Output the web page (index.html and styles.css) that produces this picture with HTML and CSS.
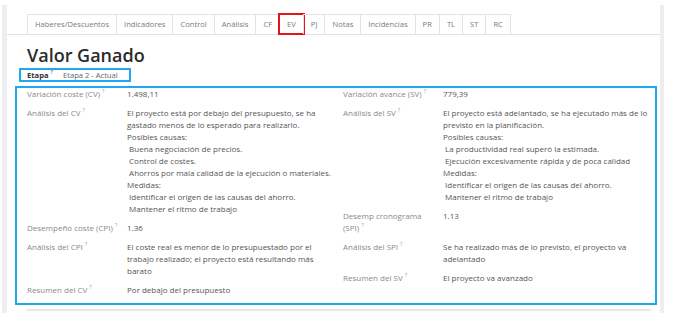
FILE: index.html
```html
<!DOCTYPE html>
<html lang="es">
  <head>
    <meta charset="UTF-8" />
    <title>Valor Ganado</title>
    <link rel="stylesheet" href="styles.css">
  </head>
  <body>
    <div class="frame">
      <div class="edge left"></div>
      <div class="sheet">
        <ul class="tabs">
          <li>Haberes/Descuentos</li>
          <li>Indicadores</li>
          <li>Control</li>
          <li>Análisis</li>
          <li>CF</li>
          <li class="marked">EV</li>
          <li>PJ</li>
          <li>Notas</li>
          <li>Incidencias</li>
          <li>PR</li>
          <li>TL</li>
          <li>ST</li>
          <li>RC</li>
        </ul>

        <div class="content">
          <h1 class="title">Valor Ganado</h1>

          <div class="stage">
            <span class="stage-label">Etapa<sup>?</sup></span>
            <span class="stage-value">Etapa 2 - Actual</span>
          </div>

          <div class="fields">
            <div class="group">
              <div class="label">Variación coste (CV)<sup>?</sup></div>
              <div class="value">1.498,11</div>

              <div class="label">Análisis del CV<sup>?</sup></div>
              <div class="value">
                El proyecto está por debajo del presupuesto, se ha<br>
                gastado menos de lo esperado para realizarlo.<br>
                Posibles causas:<br>
                &nbsp;Buena negociación de precios.<br>
                &nbsp;Control de costes.<br>
                &nbsp;Ahorros por mala calidad de la ejecución o materiales.<br>
                Medidas:<br>
                &nbsp;Identificar el origen de las causas del ahorro.<br>
                &nbsp;Mantener el ritmo de trabajo
              </div>

              <div class="label">Desempeño coste (CPI)<sup>?</sup></div>
              <div class="value">1.36</div>

              <div class="label">Análisis del CPI<sup>?</sup></div>
              <div class="value">
                El coste real es menor de lo presupuestado por el<br>
                trabajo realizado; el proyecto está resultando más<br>
                barato
              </div>

              <div class="label">Resumen del CV<sup>?</sup></div>
              <div class="value">Por debajo del presupuesto</div>
            </div>

            <div class="group">
              <div class="label">Variación avance (SV)<sup>?</sup></div>
              <div class="value">779,39</div>

              <div class="label">Análisis del SV<sup>?</sup></div>
              <div class="value">
                El proyecto está adelantado, se ha ejecutado más de lo<br>
                previsto en la planificación.<br>
                Posibles causas:<br>
                &nbsp;La productividad real superó la estimada.<br>
                &nbsp;Ejecución excesivamente rápida y de poca calidad<br>
                Medidas:<br>
                &nbsp;Identificar el origen de las causas del ahorro.<br>
                &nbsp;Mantener el ritmo de trabajo
              </div>

              <div class="label">Desemp cronograma<br>(SPI)<sup>?</sup></div>
              <div class="value">1.13</div>

              <div class="label">Análisis del SPI<sup>?</sup></div>
              <div class="value">
                Se ha realizado más de lo previsto, el proyecto va<br>
                adelantado
              </div>

              <div class="label">Resumen del SV<sup>?</sup></div>
              <div class="value">El proyecto va avanzado</div>
            </div>
          </div>

          <div class="rule"></div>
        </div>
      </div>
      <div class="edge right"></div>
    </div>
  </body>
</html>
```

FILE: styles.css
```css
body {
  margin: 0;
  background: #fff;
  color: #555;
  font-family: "Open Sans", "Liberation Sans", sans-serif;
}

.frame {
  display: flex;
  height: 308px;
  padding-top: 5px;
}

.edge {
  background-color: #eeeef1;
}
.edge.left {
  width: 5px;
  margin-left: 2px;
}
.edge.right {
  width: 4px;
}

.sheet {
  width: 653px;
}

/* pestañas */
.tabs {
  display: flex;
  margin: 0;
  padding: 9px 0 0 20px;
  list-style: none;
  border-bottom: 1px solid #e2e2e2;
}
.tabs li {
  box-sizing: border-box;
  height: 20px;
  line-height: 19px;
  padding: 0 7px;
  margin-right: -1px;
  border: 1px solid #e2e2e2;
  border-bottom: 0;
  color: #7a7a7a;
  font-size: 7.6px;
}
.tabs .marked {
  outline: 2px solid #e3141b;
  outline-offset: -1px;
}

.content {
  padding: 0 3px 0 8px;
}

.title {
  margin: 8px 0 0 12px;
  color: #2b2b2b;
  font-size: 18px;
  font-weight: 600;
  line-height: 24px;
}

sup {
  margin-left: 2px;
  color: #999;
  font-size: 5.5px;
  line-height: 0;
}

.stage {
  display: flex;
  width: fit-content;
  margin: 1px 0 0 4px;
  padding: 0 11px 0 6px;
  border: 2px solid #1ea8ef;
  font-size: 7.6px;
  line-height: 10px;
}
.stage-label {
  width: 36px;
  color: #333;
  font-weight: 700;
}
.stage-value {
  color: #666;
}

/* campos */
.fields {
  display: grid;
  grid-template-columns: 1fr 1fr;
  column-gap: 8px;
  margin-top: 4px;
  padding: 0 4px 7px 10px;
  border: 2px solid #1ea8ef;
  align-items: start;
}
.group {
  display: grid;
  grid-template-columns: 100px 1fr;
  row-gap: 7px;
  font-size: 8px;
  line-height: 12px;
}
.label {
  color: #8a8a8a;
  white-space: nowrap;
}
.value {
  color: #555;
  white-space: nowrap;
}

.rule {
  margin: 4px 6px 0 12px;
  border-top: 2px solid #e8e8e8;
}
```
